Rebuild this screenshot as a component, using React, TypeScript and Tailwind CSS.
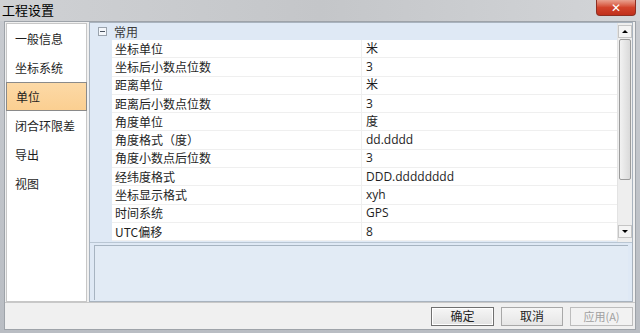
import React from "react";

const navItems = ["一般信息", "坐标系统", "单位", "闭合环限差", "导出", "视图"];

const rows: [string, string][] = [
  ["坐标单位", "米"],
  ["坐标后小数点位数", "3"],
  ["距离单位", "米"],
  ["距离后小数点位数", "3"],
  ["角度单位", "度"],
  ["角度格式（度）", "dd.dddd"],
  ["角度小数点后位数", "3"],
  ["经纬度格式", "DDD.dddddddd"],
  ["坐标显示格式", "xyh"],
  ["时间系统", "GPS"],
  ["UTC偏移", "8"],
];

const font = {
  fontFamily: '"Noto Sans CJK SC", "Noto Sans", sans-serif',
};

export default function App() {
  return (
    <div
      className="w-[640px] h-[333px] flex flex-col bg-gradient-to-b from-[#c9ccd1] to-[#b9bdc3] text-[12px] text-[#1e1e1e] overflow-hidden"
      style={font}
    >
      {/* title bar */}
      <div className="h-[21px] flex items-start justify-between bg-gradient-to-r from-[#cfd1d4] via-[#c4c6c9] to-[#d3d5d8]">
        <span className="pl-[2px] pt-[1px] text-[13px] leading-[18px] text-black">工程设置</span>
        <div className="mr-[4px] w-[40px] h-[16px] rounded-b-[4px] bg-gradient-to-b from-[#e8a08f] via-[#d2432b] to-[#c0301c] border border-[#8e2f22] border-t-0 flex items-center justify-center">
          <span className="text-white text-[12px] font-bold leading-none" style={{ fontFamily: '"DejaVu Sans", sans-serif' }}>
            ✕
          </span>
        </div>
      </div>

      {/* body */}
      <div className="flex-1 mx-[4px] mb-[3px] bg-[#f0f0f0] flex flex-col border border-[#9ea3a9]">
        <div className="flex h-[280px]">
          {/* left nav */}
          <div className="w-[81px] ml-[1px] mt-[1px] bg-white border border-[#c7c7c7] flex flex-col">
            {navItems.map((item) =>
              item === "单位" ? (
                <div
                  key={item}
                  className="h-[29px] mx-[-1px] flex items-center pl-[9px] bg-gradient-to-b from-[#fcd9a6] to-[#fbcf91] border border-[#8a8a8a]"
                >
                  {item}
                </div>
              ) : (
                <div key={item} className="h-[29px] flex items-center pl-[8px]">
                  {item}
                </div>
              )
            )}
          </div>

          {/* property grid */}
          <div className="flex-1 ml-[2px] mr-[2px] flex flex-col border border-[#a9b3be] bg-[#dfe9f5]">
            <div className="flex h-[220px] border-b border-[#b9c6d3]">
              <div className="flex-1 flex flex-col">
                {/* category */}
                <div className="h-[17px] flex items-center bg-[#dfe9f5]">
                  <div className="ml-[8px] w-[9px] h-[9px] border border-[#9aa3ad] flex items-center justify-center bg-[#f4f7fb]">
                    <div className="w-[5px] h-[1px] bg-[#4a5360]" />
                  </div>
                  <span className="ml-[7px] text-[#3a3a3a]">常用</span>
                </div>
                {rows.map(([name, value]) => (
                  <div key={name} className="h-[18.3px] flex">
                    <div className="w-[22px] bg-[#dfe9f5]" />
                    <div className="w-[250px] bg-white border-b border-r border-[#efefef] pl-[3px] flex items-center">
                      {name}
                    </div>
                    <div
                      className="flex-1 bg-white border-b border-[#efefef] pl-[4px] flex items-center text-[12px]"
                      style={{ fontFamily: '"Open Sans", "Noto Sans CJK SC", sans-serif' }}
                    >
                      {value}
                    </div>
                  </div>
                ))}
              </div>

              {/* scrollbar */}
              <div className="w-[15px] flex flex-col bg-[#eeeeee] border-l border-[#e3e3e3]">
                <div className="h-[13px] mt-[2px] flex items-center justify-center bg-[#f4f4f4] border border-[#c5c5c5]">
                  <div className="w-0 h-0 border-l-[3px] border-r-[3px] border-b-[3px] border-l-transparent border-r-transparent border-b-black" />
                </div>
                <div className="h-[141px] mx-[1px] mt-[1px] bg-gradient-to-r from-[#f2f2f2] via-[#e6e6e6] to-[#dadada] border border-[#9b9b9b] rounded-[2px]" />
                <div className="flex-1" />
                <div className="h-[13px] mb-[4px] flex items-center justify-center bg-[#f4f4f4] border border-[#c5c5c5]">
                  <div className="w-0 h-0 border-l-[3px] border-r-[3px] border-t-[3px] border-l-transparent border-r-transparent border-t-black" />
                </div>
              </div>
            </div>

            {/* description */}
            <div className="flex-1 mx-[4px] mb-[1px] mt-[2px] border-l border-t border-[#a7b4c1] bg-[#e2ebf5]" />
          </div>
        </div>

        {/* buttons */}
        <div className="flex-1 flex items-center justify-end gap-[7px] pr-[2px] border-t border-[#c8c8c8]">
          <button className="w-[63px] h-[19px] border border-[#707070] bg-gradient-to-b from-[#f6f6f6] to-[#e2e2e2] text-[12px] leading-none shadow-[inset_0_0_0_1px_#ffffff]">
            确定
          </button>
          <button className="w-[62px] h-[19px] border border-[#a8a8a8] bg-gradient-to-b from-[#f6f6f6] to-[#e6e6e6] text-[12px] leading-none">
            取消
          </button>
          <button className="w-[63px] h-[19px] border border-[#bdbdbd] bg-[#f2f2f2] text-[#a0a0a0] text-[11px] leading-none">
            应用(A)
          </button>
        </div>
      </div>
    </div>
  );
}
